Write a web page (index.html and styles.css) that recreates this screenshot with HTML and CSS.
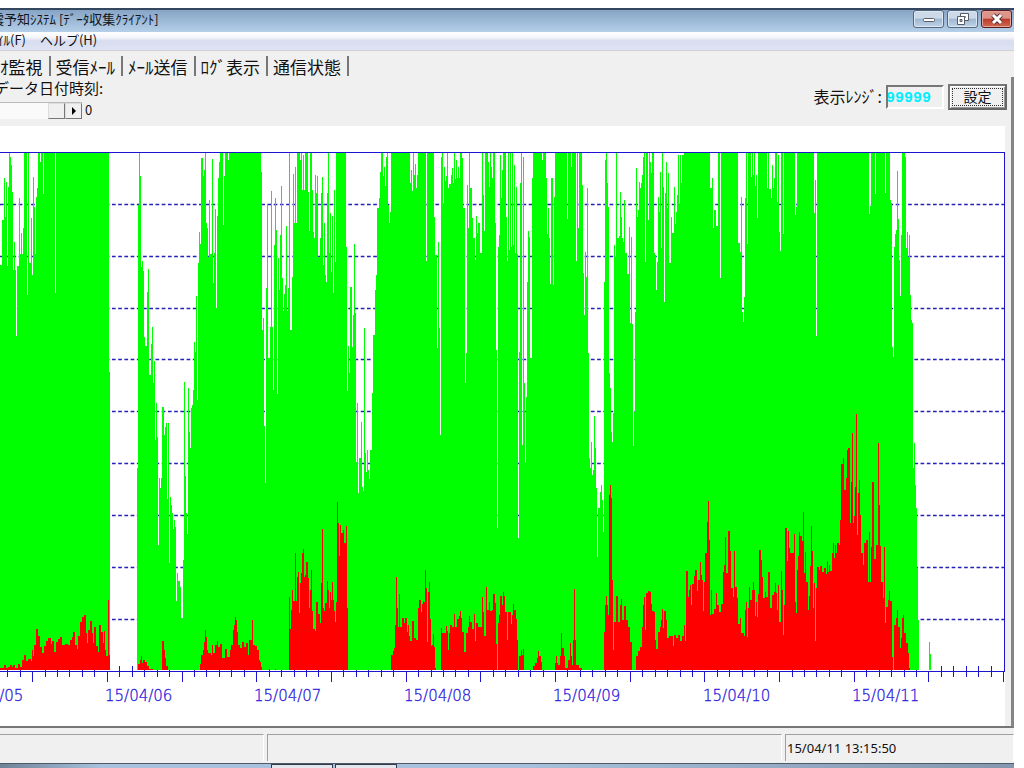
FILE: index.html
```html
<!DOCTYPE html>
<html lang="ja">
<head>
<meta charset="utf-8">
<title>データ収集クライアント</title>
<link rel="stylesheet" href="styles.css">
</head>
<body>
<div class="window">
  <header class="titlebar">
    <h1 class="title">震予知ｼｽﾃﾑ [ﾃﾞｰﾀ収集ｸﾗｲｱﾝﾄ]</h1>
    <div class="caption-buttons">
      <button class="caption" type="button" aria-label="最小化"><svg width="14" height="12" viewBox="0 0 14 12"><rect x="1.500" y="5.500" width="11" height="3" rx="1" fill="#fff" stroke="#565d68"/></svg></button>
      <button class="caption" type="button" aria-label="元に戻す"><svg width="14" height="14" viewBox="0 0 14 14"><path d="M4.500 1.500h8v7h-8z" fill="#fff" stroke="#565d68"/><path d="M7 4h3v2H7z" fill="#8a93a0"/><path d="M1.500 4.500h7v8h-7z" fill="#fff" stroke="#565d68"/><path d="M4 7.500h2v2H4z" fill="#b5c5d8" stroke="#565d68"/></svg></button>
      <button class="caption caption-close" type="button" aria-label="閉じる"><svg width="14" height="12" viewBox="0 0 14 12"><path d="M3 2l8 8M11 2l-8 8" stroke="#5c3438" stroke-width="5"/><path d="M3 2l8 8M11 2l-8 8" stroke="#fff" stroke-width="3"/></svg></button>
    </div>
  </header>
  <nav class="menubar">
    <button class="menu menu-first" type="button">ｲﾙ(F)</button>
    <button class="menu" type="button">ヘルプ(H)</button>
  </nav>
  <div class="tabs" role="tablist">
    <button class="tab tab-first" type="button" role="tab" aria-selected="true">ｵ監視</button>
    <button class="tab" type="button" role="tab">受信ﾒｰﾙ</button>
    <button class="tab" type="button" role="tab">ﾒｰﾙ送信</button>
    <button class="tab" type="button" role="tab">ﾛｸﾞ表示</button>
    <button class="tab" type="button" role="tab">通信状態</button>
  </div>
  <main class="page">
    <div class="controls">
      <div class="timestamp">
        <span class="timestamp-label">データ日付時刻:</span>
        <div class="scroll-row">
          <div class="scroll-track">
            <button class="scroll-button" type="button" aria-label="スクロール位置"></button>
            <button class="scroll-button" type="button" aria-label="次へ"><svg width="6" height="8" viewBox="0 0 6 8"><path d="M1 0l4 4-4 4z"/></svg></button>
          </div>
          <output class="scroll-value">0</output>
        </div>
      </div>
      <div class="range">
        <label for="range">表示ﾚﾝｼﾞ:</label>
        <input class="range-input" id="range" type="text" value="99999">
        <button class="range-button" type="button"><span class="range-focus">設定</span></button>
      </div>
    </div>
    <div class="chart">
      <svg class="plot" viewBox="0 126 1005 600" role="img" aria-label="観測グラフ">
        <g id="grid" class="grid"></g>
        <path id="ticks" class="axis"/>
        <path id="green" class="green"/>
        <path id="red" class="red"/>
        <path id="axis" class="axis"/>
        <g id="dates" class="dates"></g>
      </svg>
    </div>
  </main>
  <footer class="status">
    <div class="status-cell status-left"></div>
    <div class="status-cell status-middle"></div>
    <div class="status-cell status-time">15/04/11 13:15:50</div>
  </footer>
  <div class="taskbar"><span class="task"></span><span class="task"></span></div>
</div>
<script src="chart.js"></script>
</body>
</html>
```
FILE: styles.css
```css
* { box-sizing: border-box; }
body {
  margin: 0;
  background: #fff;
  color: #111;
  font-family: "Noto Sans CJK JP", sans-serif;
}
button, input { font: inherit; color: inherit; margin: 0; }
.window {
  display: flex;
  flex-direction: column;
  min-height: 100vh;
  margin-right: 10px;
  padding-top: 8px;
  overflow: hidden;
}
.titlebar {
  display: flex;
  justify-content: space-between;
  height: 24px;
  border-top: 2px solid #34475e;
  background: linear-gradient(#86a4c5, #b5cfe9);
}
.title {
  margin: 0 0 0 -9px;
  font-size: 13px;
  font-weight: 400;
  line-height: 18px;
  color: #10151c;
  white-space: nowrap;
}
.caption-buttons { display: flex; gap: 3px; padding-right: 2px; }
.caption {
  display: flex;
  align-items: center;
  justify-content: center;
  width: 31px;
  height: 18px;
  padding: 0;
  border: 1px solid #526780;
  border-radius: 3px;
  background: linear-gradient(#cbd9e8 45%, #9eb6d0 50%, #bfd4e9);
  box-shadow: inset 0 0 0 1px #dce7f2;
}
.caption-close {
  border-color: #5a1c1c;
  background: linear-gradient(#dc9488 45%, #bd3b2c 50%, #cf6850);
  box-shadow: inset 0 0 0 1px #e3a49a;
}
.menubar {
  display: flex;
  align-items: flex-start;
  gap: 14px;
  height: 19px;
  background: linear-gradient(#fff 0, #f4f5fb 30%, #d7dcee 50%, #dfe4f5);
  border-bottom: 1px solid #cfcfd4;
}
.menu {
  padding: 0;
  border: 0;
  background: none;
  font-size: 13px;
  line-height: 16px;
}
.menu-first { margin-left: -3px; }
.tabs { display: flex; height: 26px; padding-top: 5px; background: #f0f0f0; }
.tab {
  padding: 0 6px 0 5px;
  border: 0;
  border-right: 2px solid #777;
  height: 20px;
  background: none;
  font-size: 17px;
  line-height: 17px;
  white-space: nowrap;
}
.tab-first { padding-left: 0; }
.page {
  flex: 1;
  display: flex;
  flex-direction: column;
  padding-right: 6px;
  border-right: 3px solid #858585;
  border-bottom: 2px solid #777;
  background: #f0f0f0;
}
.controls {
  display: flex;
  justify-content: space-between;
  height: 49px;
}
.timestamp-label {
  display: block;
  height: 25px;
  margin-left: -6px;
  font-size: 15px;
  line-height: 22px;
}
.scroll-row { display: flex; gap: 3px; height: 17px; }
.scroll-track {
  display: flex;
  justify-content: flex-end;
  width: 82px;
  border-top: 1px solid #bbb;
  background: #fafafa;
}
.scroll-button {
  display: flex;
  align-items: center;
  justify-content: center;
  width: 17px;
  padding: 0;
  border: 1px solid;
  border-color: #ddd #777 #777 #ddd;
  background: #f0f0f0;
}
.scroll-value { font-size: 13px; line-height: 16px; }
.range {
  display: flex;
  align-items: center;
  height: 40px;
  margin-right: -2px;
  font-size: 16px;
  line-height: 20px;
}
.range label { padding-bottom: 3px; }
.range-input {
  width: 58px;
  height: 24px;
  margin: 0 4px;
  padding: 2px 0 0;
  border: 2px solid;
  border-color: #777 #fff #fff #777;
  background: #f0f0f0;
  color: #00eeff;
  font: bold 15px "Liberation Mono", monospace;
  text-indent: -2px;
}
.range-button {
  width: 59px;
  height: 26px;
  padding: 2px;
  border: 2px solid;
  border-color: #777 #666 #666 #777;
  background: #f0f0f0;
  font-size: 14px;
  line-height: 14px;
  box-shadow: inset 1px 1px #fff, inset -1px -1px #999;
}
.range-focus { display: block; padding-bottom: 2px; border: 1px dotted #333; }
.chart { flex: 1; background: #fff; }
.plot { display: block; width: 100%; }
.grid { stroke: #2222b8; stroke-width: 1.300; stroke-dasharray: 3.700 2.520; }
.green, .red, .axis { shape-rendering: crispEdges; }
.green { fill: #00ff00; }
.red { fill: #ff0000; }
.axis { fill: none; stroke: #1c14d0; stroke-width: 1; }
.dates {
  fill: #2a20dc;
  stroke: #2a20dc;
  stroke-width: 0.300;
  font: 200 15px "DejaVu Sans", sans-serif;
}
.status { display: flex; gap: 3px; height: 35px; padding: 6px 0 2px; background: #f0f0f0; }
.status-cell {
  border-top: 1px solid #a0a0a0;
  border-left: 1px solid #a0a0a0;
  border-right: 1px solid #fff;
}
.status-left { width: 264px; border-left: 0; }
.status-middle { flex: 1; }
.status-time {
  width: 229px;
  padding-left: 1px;
  font: 13px/26px "Noto Sans", sans-serif;
}
.taskbar {
  display: flex;
  gap: 2px;
  height: 5px;
  padding-left: 271px;
  border-top: 1px solid #4c5b6b;
  background: linear-gradient(90deg, #6f8397 0, #a9c1dc 10%, #a9c1dc 50%, #8497ad);
}
.task { width: 62px; border: 1px solid #333d49; border-bottom: 0; background: #e3e8ee; }
```
FILE: chart.js
```js
// Each entry is "x:top": from x onwards the bars reach up to y = top.
const BASE = 670;
const GREEN = `0:265 2:220 4:178 5:217 6:182 7:266 8:187 9:152 10:157 11:165 12:192 13:270 14:242 15:270 16:336 17:266 18:266 19:198 20:254 21:233 22:254 23:228 24:152 27:295 28:152 29:263 31:218 32:275 33:177 34:207 35:254 36:197 37:188 38:152 40:162 41:152 43:194 44:152 55:293 56:152 109:372 110:670
137:468 138:205 139:152 140:176 141:267 142:261 143:271 144:337 145:346 147:292 148:269 149:375 151:344 152:327 153:383 154:361 155:440 156:403 157:437 158:545 159:478 160:488 161:478 162:407 164:435 165:427 166:423 167:499 168:423 169:563 170:497 171:505 172:513 173:529 174:520 175:527 176:601 177:573 178:581 180:587 181:618 182:618 183:560 184:382 185:476 186:513 187:534 188:388 189:432 190:448 191:408 192:405 193:390 194:342 195:352 196:296 197:400 198:263 199:232 200:244 201:158 203:176 204:170 205:152 206:223 207:228 208:257 209:200 210:254 212:159 213:283 214:253 215:209 216:308 217:216 218:178 219:162 220:152 223:225 224:176 225:152 228:160 229:152
261:172 262:330 263:318 264:426 265:483 266:288 267:205 268:358 270:327 271:191 272:327 273:390 274:245 275:198 276:230 277:394 278:258 279:290 280:235 281:186 282:278 283:311 284:294 285:285 286:226 287:311 288:288 289:152 290:330 292:277 293:174 294:223 295:167 296:223 297:152 300:160 301:152 302:190 303:155 304:190 305:152 308:192 309:231 310:152 312:190 313:232 314:238 315:175 316:193 317:176 318:257 320:238 321:193 322:177 323:265 324:223 325:275 326:282 327:193 328:152 329:253 330:213 331:272 332:216 333:293 334:190 335:262 336:152
346:247 347:391 348:346 349:373 350:287 352:347 353:315 354:244 355:313 356:462 357:403 358:493 359:458 361:422 362:487 363:491 364:328 365:453 366:472 367:450 368:470 369:479 370:450 372:393 373:335 375:290 376:275 377:208 379:198 380:172 381:152 383:176 384:167 385:186 386:157 387:152 388:205 389:223 390:212 391:152 410:183 411:170 412:191 413:152 414:175 415:164 416:188 417:175 418:152 426:261 427:152
434:217 435:255 437:348 438:242 439:328 440:435 441:157 442:152 443:204 444:167 445:181 446:176 447:152 448:188 449:184 451:175 452:168 453:183 454:152 455:179 456:160 457:178 458:167 459:178 460:152 462:158 463:208 465:383 466:353 467:185 468:228 469:152 470:188 472:218 473:238 475:260 476:216 477:233 478:223 480:253 482:152 483:195 484:231 485:152 488:162 489:187 490:152 491:167 492:178 493:152 495:223 496:350 497:528 498:247 499:235 500:155 501:198 502:170 503:152 506:217 507:261 508:152 509:250 510:152 511:247 512:152 513:245 514:165 515:253 516:187 517:254 518:538 519:352 520:183 521:152 522:445 523:157 524:383 525:463 526:397 527:282 528:231 529:237 530:358 532:178 533:152 542:160 543:152 546:178 547:234 548:208 549:238 550:284 551:178 553:285 554:197 555:152 567:219 568:152 571:167 572:152 576:261 577:152 578:228 579:152
582:185 583:273 584:315 585:252 586:277 587:188 588:353 589:458 590:468 591:442 592:475 593:470 594:416 595:448 596:488 597:557 598:508 600:492 601:485 602:500 603:532 604:282 605:160 606:152 607:183 608:207 609:373 610:388 611:432 612:442 613:413 614:245 615:257 616:152 617:238 619:236 620:192 621:217 622:238 623:242 624:200 625:253 627:274 629:227 630:323 631:237 632:324 633:446 634:412 635:312 636:168 637:217 638:210 639:182 640:188 641:183 642:175 643:157 644:152 645:262 646:152 648:220 649:152 650:162 651:173 652:152 654:253 655:255 656:290 657:262 658:197 659:212 660:172 661:248 662:152 663:187 664:302 665:193 666:162 667:208 668:173 669:263 671:217 672:233 674:187 675:224 676:212 677:195 678:155 679:204 680:155 681:183 682:155 684:152
710:188 712:178 713:228 714:210 716:226 718:152 720:278 721:152 738:243 740:252 741:197 742:312 743:322 744:297 745:198 746:152 747:244 748:152 751:177 752:152 753:175 754:152 755:186 756:175 757:218 758:152 767:188 768:152 769:189 771:198 772:165 773:188 774:178 775:152 777:202 778:155 779:232 780:251 781:152 783:234 784:152 795:215 796:207 797:152 814:213 815:180 816:336 817:152 869:214 870:206 871:152 875:194 876:152 885:193 886:152 890:200 891:203 892:347 893:357 894:247 895:234 896:230 897:171 898:219 899:260 900:296 901:235 902:152 905:157 906:248 907:232 908:257 909:235 910:295 911:320 912:323 913:468 914:443 915:485 916:508 917:568 918:620 919:670 929:642 930:654 931:670`;
const RED = `0:668 4:665 6:668 8:667 10:665 12:667 13:665 15:668 18:664 20:667 22:660 24:655 26:661 28:659 31:661 32:650 33:656 34:645 36:629 38:636 40:647 42:653 44:646 46:641 48:638 51:644 52:641 54:652 56:642 58:639 60:637 62:645 65:644 68:645 70:640 72:637 73:632 75:645 77:649 78:636 80:622 82:617 84:615 86:633 87:643 88:630 90:621 92:633 93:643 94:627 96:646 98:652 99:625 101:632 103:643 104:631 105:650 106:656 108:600 109:655 110:670
138:664 140:660 141:656 142:663 143:660 145:662 147:666 149:669 153:670 162:641 164:650 165:658 166:666 168:670 200:664 201:655 203:650 204:642 205:630 206:637 207:650 208:653 211:655 212:645 213:653 215:645 217:641 218:647 220:644 222:658 225:649 227:657 230:650 231:645 233:630 234:625 235:617 236:620 237:632 238:645 240:648 242:642 244:647 246:643 248:655 249:640 252:620 253:645 255:646 257:650 259:660 260:662 261:667 262:670 269:669 270:670 275:669 276:670
289:597 290:629 291:610 292:590 293:601 295:553 296:601 297:577 298:572 299:613 300:583 301:573 302:553 303:549 304:577 305:575 306:562 307:562 308:578 309:608 310:590 311:570 312:611 313:629 315:631 316:602 318:614 320:623 321:583 322:529 323:608 324:611 325:603 327:581 328:590 329:608 330:592 331:600 332:582 333:600 334:611 335:622 336:602 337:502 338:523 339:556 340:525 341:533 343:530 344:543 346:526 347:608 348:670
391:655 393:651 394:648 395:625 396:577 397:608 398:627 399:594 400:627 402:618 404:623 405:618 407:632 408:625 409:636 410:641 412:621 414:638 416:640 418:608 419:600 421:612 422:604 423:601 424:602 425:570 426:588 427:642 428:592 429:582 430:619 431:646 432:645 433:634 434:647 435:668 436:670
441:628 442:633 445:633 446:626 447:631 448:650 449:633 450:625 452:627 454:614 455:627 457:619 459:616 460:611 461:618 462:632 464:652 466:633 468:627 469:616 470:622 472:629 474:614 475:641 476:623 478:627 480:627 482:597 483:612 484:636 486:587 487:610 489:602 490:611 492:610 493:594 495:603 496:644 497:670 498:623 499:615 500:596 502:605 503:592 504:596 505:612 507:640 508:612 511:624 512:615 513:604 514:610 516:619 517:640 518:670 519:656 521:650 522:655 523:649 524:670 533:666 535:663 537:658 538:651 539:656 541:662 542:670 555:663 556:656 557:663 558:665 560:656 561:633 562:648 564:656 565:668 568:660 570:643 571:656 572:665 573:640 574:589 575:640 576:665 579:668 582:670
604:632 605:605 606:596 607:605 608:615 609:495 610:485 611:498 612:580 613:650 614:622 616:596 618:622 620:605 621:599 622:620 624:606 626:620 628:627 630:642 632:670 636:656 638:651 640:647 642:627 643:605 644:597 645:630 646:593 648:591 650:592 651:604 652:611 654:612 655:640 656:649 658:632 660:627 661:620 662:609 663:628 664:611 666:620 667:638 669:636 673:646 674:635 676:638 678:635 680:641 682:636 684:625 685:641 686:571 688:597 689:590 690:585 691:605 692:584 694:576 695:570 697:591 698:580 700:562 701:575 702:580 703:611 704:582 705:553 707:522 708:501 709:540 710:615 711:590 712:614 714:609 716:593 717:605 719:612 721:604 723:572 724:565 725:537 726:573 728:531 730:551 731:588 733:597 734:551 735:587 737:598 738:624 740:618 741:633 744:636 745:610 746:602 747:637 748:608 749:587 750:600
752:590 753:582 754:590 755:616 756:602 757:617 758:594 759:550 761:560 762:577 763:598 765:592 766:597 768:572 770:608 772:595 774:592 775:583 776:593 777:610 778:585 779:622 781:571 782:590 783:635 784:605 785:528 787:561 788:531 789:548 790:553 794:534 795:602 796:613 797:570 798:556 799:532 800:536 802:541 803:512 804:573 805:552 806:582 808:610 809:596 810:566 811:526 812:551 813:608 814:583 815:641 816:588 817:567 819:570 820:566 822:572 824:568 826:574 827:561 828:572 829:565 830:571 832:553 833:543 834:558 835:545 836:553 837:543 839:545 840:520 841:464 843:458 844:490 846:478 847:450 848:448 850:523 851:482 852:433 853:523 854:516 855:487 856:414 857:535 858:493 859:480 860:515 861:553 863:565 864:543 866:540 868:582 869:532 870:582 871:547 872:482 874:480 874:559 876:545 878:443 879:505 880:546 881:582 883:598 884:547 885:623 886:607 888:600 889:591 890:601 892:657 893:670 894:625 896:618 897:610 898:627 900:648 901:638 902:618 903:615 904:633 906:643 908:653 909:668 910:670`;

function area(levels) {
  const steps = levels.split(/\s+/).map(s => s.split(":"));
  return `M0 ${BASE}` + steps.map(([x, y]) => `H${x}V${y}`).join("") + "Z";
}

const get = id => document.getElementById(id);
get("green").setAttribute("d", area(GREEN));
get("red").setAttribute("d", area(RED));

let grid = "";
for (let i = 1; i < 10; i++) {
  const y = Math.round(152 + i * 51.85) + 0.5;
  grid += `<line x1="0" x2="1004" y1="${y}" y2="${y}"/>`;
}
get("grid").innerHTML = grid;

const DAY = 149.4;
let ticks = "";
for (let i = -8; i <= 72; i++) {
  const x = Math.floor(107.3 + i * DAY / 12) + 0.5;
  if (x < 0) continue;
  ticks += i % 6 ? `M${x} 666V677` : `M${x} 671V682`;
}
get("ticks").setAttribute("d", ticks);
get("axis").setAttribute("d", "M0 152.5H1004.5V671.5M0 671.5H1004.5");

let dates = "";
for (let i = -1; i < 6; i++) {
  const day = String(6 + i).padStart(2, "0");
  dates += `<text x="${Math.round(105 + i * DAY)}" y="701">15/04/${day}</text>`;
}
get("dates").innerHTML = dates;
```
